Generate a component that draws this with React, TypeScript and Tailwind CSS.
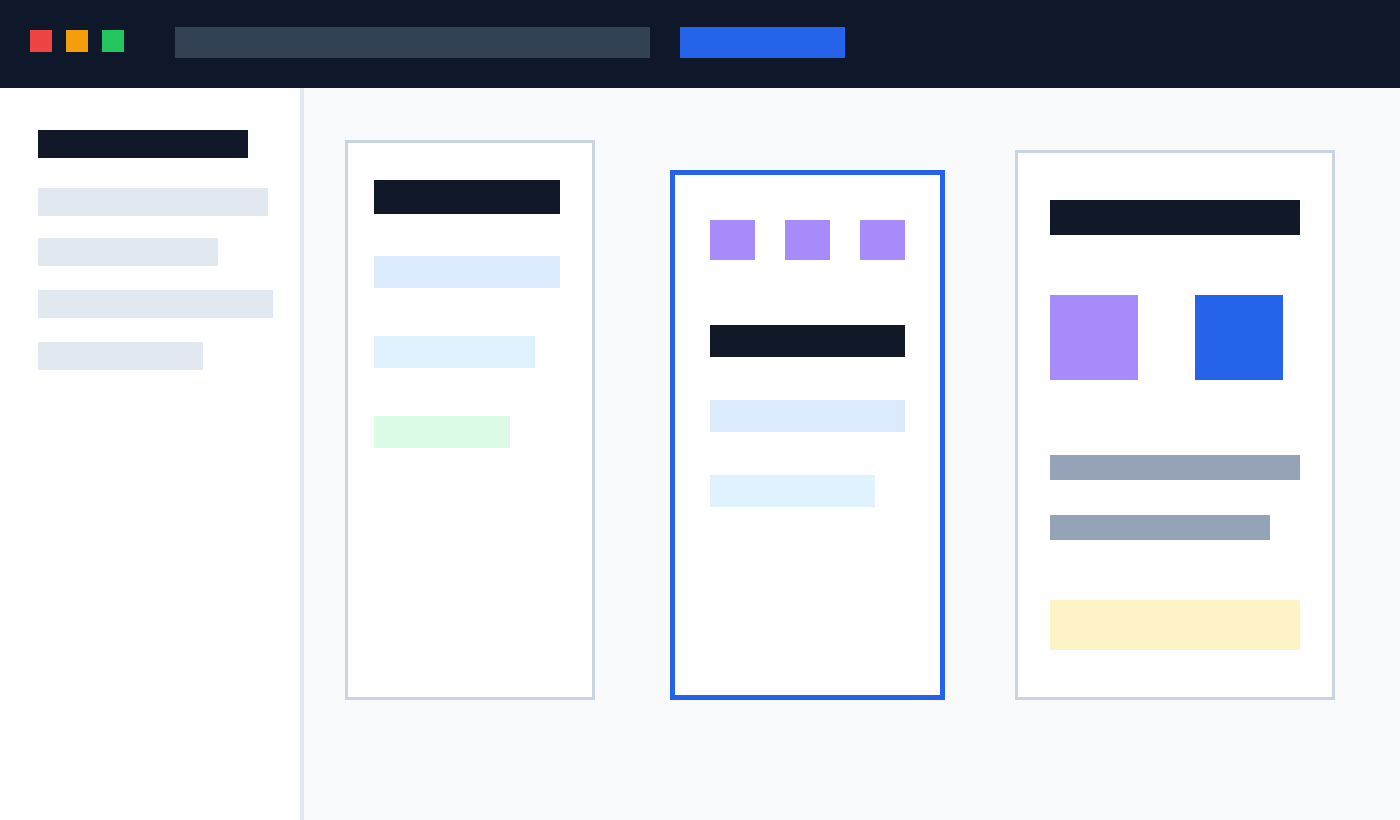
export default function App() {
  return (
    <div className="h-screen w-full flex flex-col overflow-hidden bg-[#f8fafc]">
      {/* Top bar */}
      <div className="h-[88px] shrink-0 bg-[#0f172a] flex items-center">
        <div className="flex items-center gap-[14px] pl-[30px] -mt-[6px]">
          <div className="w-[22px] h-[22px] bg-[#ef4444]" />
          <div className="w-[22px] h-[22px] bg-[#f59e0b]" />
          <div className="w-[22px] h-[22px] bg-[#22c55e]" />
        </div>
        <div className="ml-[51px] w-[475px] h-[31px] bg-[#334155] -mt-[3px]" />
        <div className="ml-[30px] w-[165px] h-[31px] bg-[#2563eb] -mt-[3px]" />
      </div>

      <div className="flex flex-1 min-h-0">
        {/* Sidebar */}
        <div className="w-[304px] shrink-0 bg-white border-r-4 border-[#e2e8f0] pt-[42px] pl-[38px] flex flex-col">
          <div className="w-[210px] h-[28px] bg-[#111827]" />
          <div className="mt-[30px] w-[230px] h-[28px] bg-[#e2e8f0]" />
          <div className="mt-[22px] w-[180px] h-[28px] bg-[#e2e8f0]" />
          <div className="mt-[24px] w-[235px] h-[28px] bg-[#e2e8f0]" />
          <div className="mt-[24px] w-[165px] h-[28px] bg-[#e2e8f0]" />
        </div>

        {/* Main */}
        <main className="flex-1 flex items-start pl-[41px]">
          <div className="mt-[52px] w-[250px] h-[560px] bg-white border-[3px] border-[#cbd5e1] pt-[37px] pl-[26px] flex flex-col">
            <div className="w-[186px] h-[34px] bg-[#111827]" />
            <div className="mt-[42px] w-[186px] h-[32px] bg-[#dbeafe]" />
            <div className="mt-[48px] w-[161px] h-[32px] bg-[#e0f2fe]" />
            <div className="mt-[48px] w-[136px] h-[32px] bg-[#dcfce7]" />
          </div>

          <div className="ml-[75px] mt-[82px] w-[275px] h-[530px] bg-white border-[5px] border-[#2563eb] pt-[45px] pl-[35px] flex flex-col">
            <div className="flex gap-[30px]">
              <div className="w-[45px] h-[40px] bg-[#a78bfa]" />
              <div className="w-[45px] h-[40px] bg-[#a78bfa]" />
              <div className="w-[45px] h-[40px] bg-[#a78bfa]" />
            </div>
            <div className="mt-[65px] w-[195px] h-[32px] bg-[#111827]" />
            <div className="mt-[43px] w-[195px] h-[32px] bg-[#dbeafe]" />
            <div className="mt-[43px] w-[165px] h-[32px] bg-[#e0f2fe]" />
          </div>

          <div className="ml-[70px] mt-[62px] w-[320px] h-[550px] bg-white border-[3px] border-[#cbd5e1] pt-[47px] pl-[32px] flex flex-col">
            <div className="w-[250px] h-[35px] bg-[#111827]" />
            <div className="mt-[60px] flex gap-[57px]">
              <div className="w-[88px] h-[85px] bg-[#a78bfa]" />
              <div className="w-[88px] h-[85px] bg-[#2563eb]" />
            </div>
            <div className="mt-[75px] w-[250px] h-[25px] bg-[#94a3b8]" />
            <div className="mt-[35px] w-[220px] h-[25px] bg-[#94a3b8]" />
            <div className="mt-[60px] w-[250px] h-[50px] bg-[#fef3c7]" />
          </div>
        </main>
      </div>
    </div>
  )
}
